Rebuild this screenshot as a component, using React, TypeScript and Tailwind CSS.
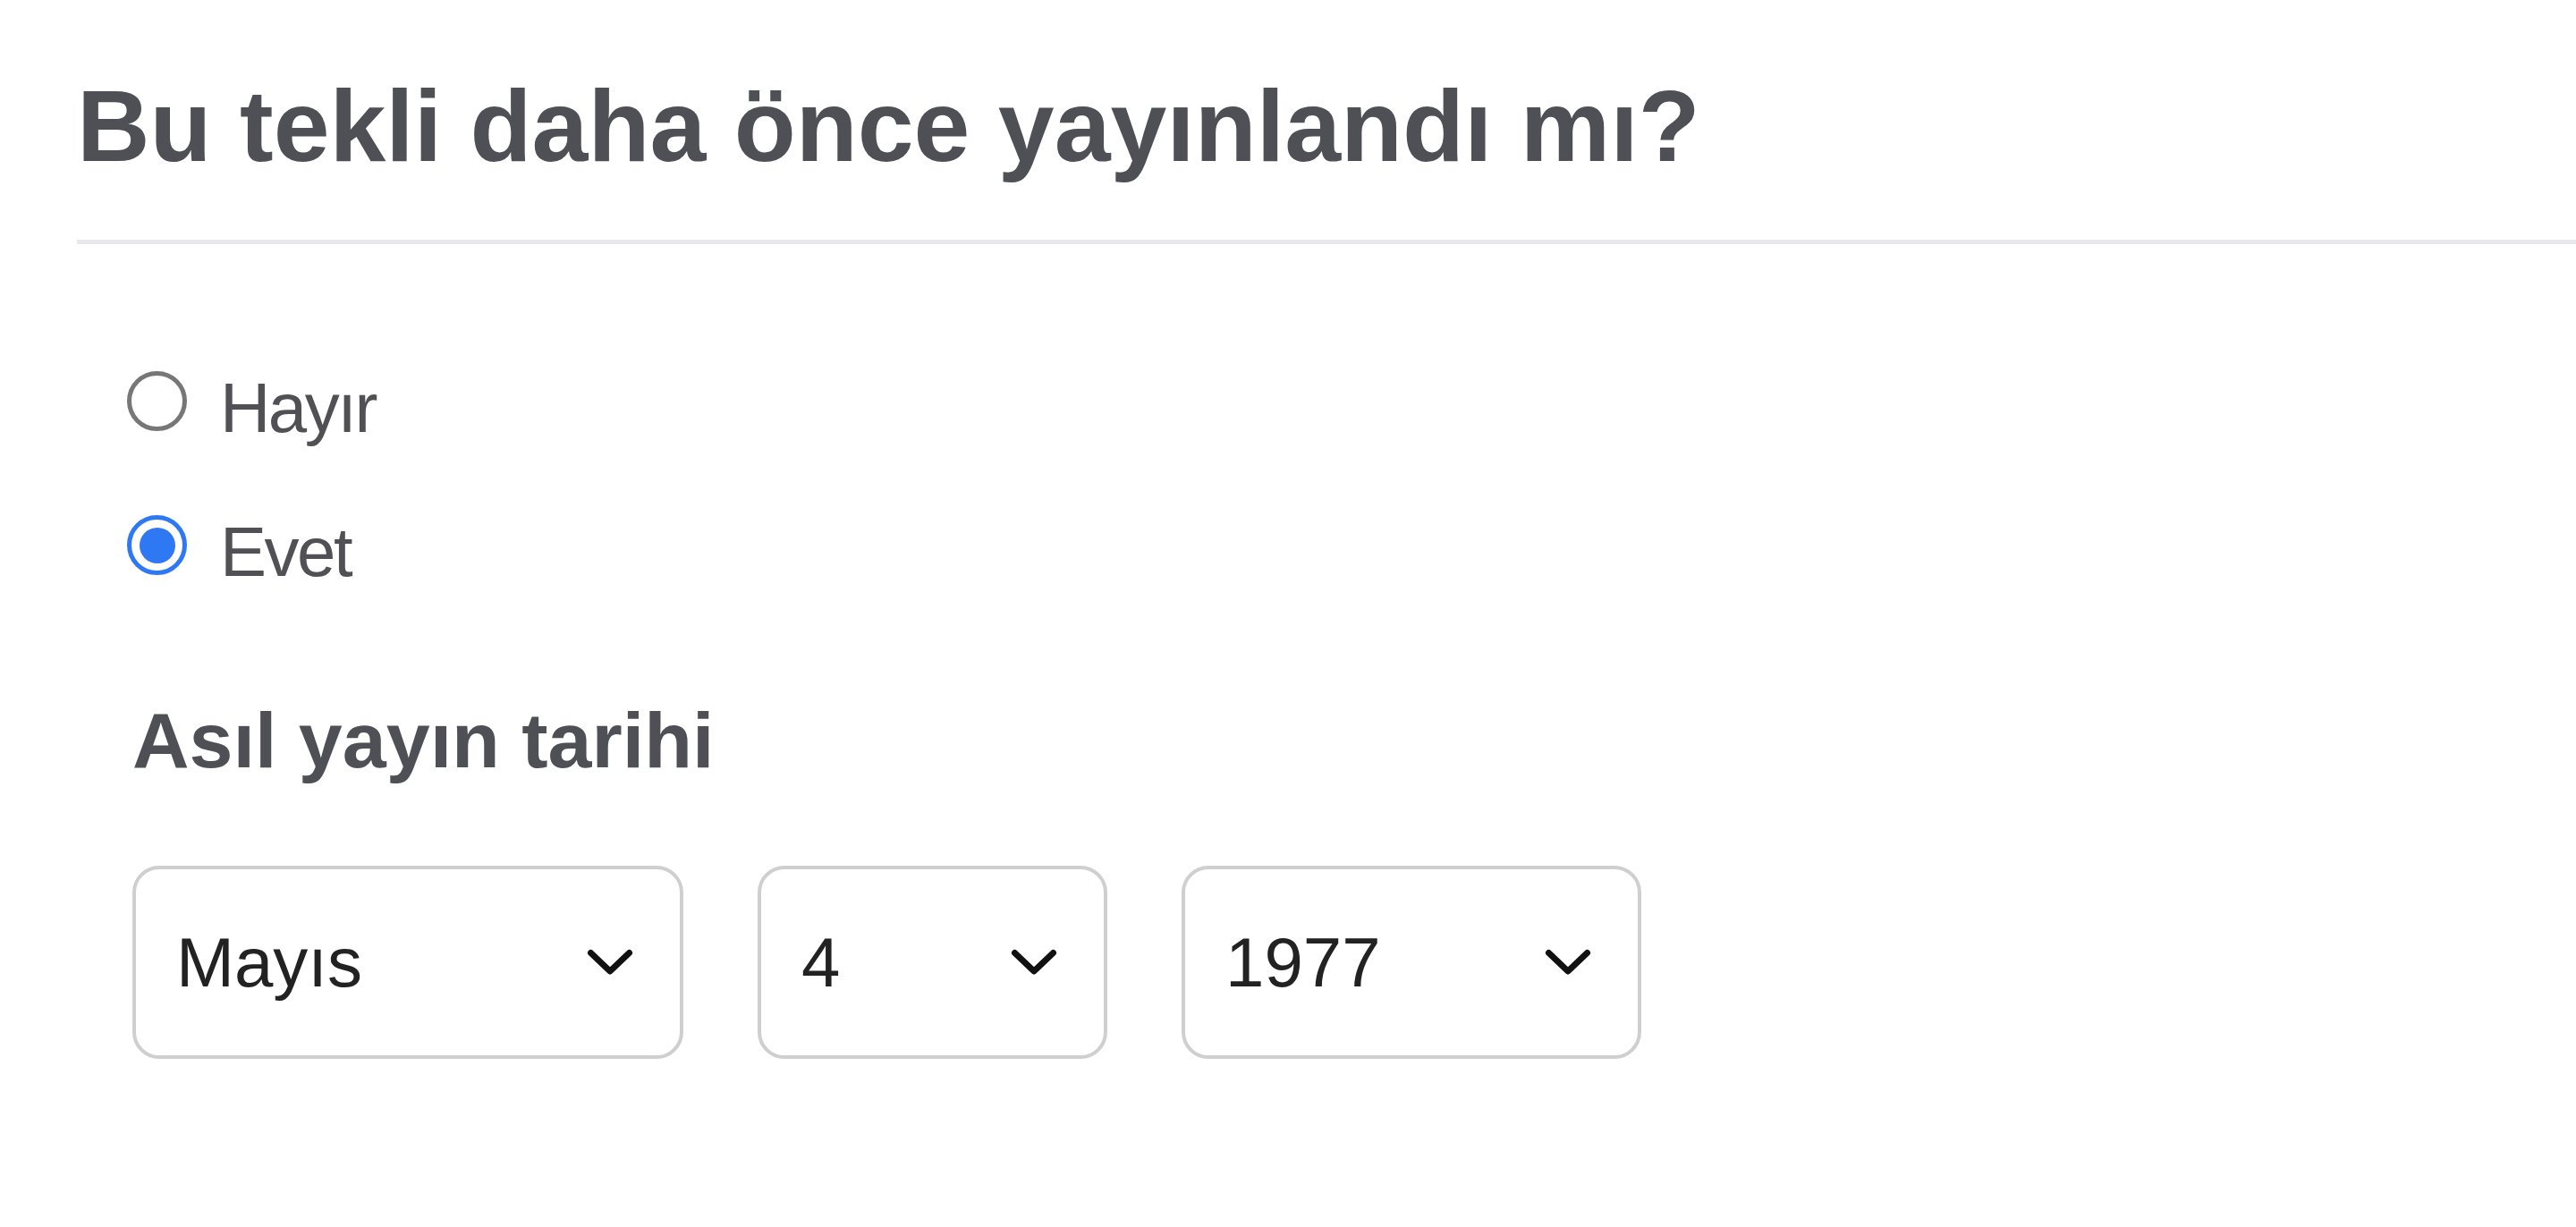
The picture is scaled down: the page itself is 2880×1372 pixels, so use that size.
import { useState } from 'react'

const months = ['Ocak', 'Şubat', 'Mart', 'Nisan', 'Mayıs', 'Haziran', 'Temmuz', 'Ağustos', 'Eylül', 'Ekim', 'Kasım', 'Aralık']

export default function App() {
  const [released, setReleased] = useState<'no' | 'yes'>('yes')

  return (
    <div className="min-h-screen bg-white font-['Liberation_Sans',Arial,sans-serif] text-[#4f5055]">
      <div className="pt-[84px] pl-[86px]">
        <h1 className="text-[113px] leading-[114px] font-bold whitespace-nowrap">Bu tekli daha önce yayınlandı mı?</h1>
        <div className="mt-[70px] h-[5px] bg-[#e8e8ec]" />

        {/* Radios */}
        <div className="pl-[56px] pt-[138px] flex flex-col gap-[71px]">
          <Radio label="Hayır" checked={released === 'no'} onClick={() => setReleased('no')} />
          <Radio label="Evet" checked={released === 'yes'} onClick={() => setReleased('yes')} />
        </div>

        {released === 'yes' && (
          <div className="pl-[62px]">
            <h2 className="mt-[116px] text-[88px] leading-[100px] font-bold whitespace-nowrap">Asıl yayın tarihi</h2>
            <div className="mt-[90px] flex gap-[83px]">
              <SelectBox value={months[4]} width="w-[616px]" />
              <SelectBox value="4" width="w-[391px]" />
              <SelectBox value="1977" width="w-[514px]" />
            </div>
          </div>
        )}
      </div>
    </div>
  )
}

function Radio({ label, checked, onClick }: { label: string; checked?: boolean; onClick: () => void }) {
  return (
    <button onClick={onClick} className="flex items-start h-[90px] text-left">
      {checked ? (
        <span className="mt-[4px] w-[67px] h-[67px] rounded-full border-[5px] border-[#2f78f4] flex items-center justify-center">
          <span className="w-[40px] h-[40px] rounded-full bg-[#2f78f4]" />
        </span>
      ) : (
        <span className="mt-[4px] w-[67px] h-[67px] rounded-full border-[5px] border-[#777777]" />
      )}
      <span className="ml-[37px] text-[78px] leading-[90px] tracking-[-2.5px] text-[#505055]">{label}</span>
    </button>
  )
}

function SelectBox({ value, width }: { value: string; width: string }) {
  return (
    <div className={`${width} h-[216px] border-[4px] border-[#cfcfcf] rounded-[30px] pl-[45px] pr-[52px] flex items-center justify-between bg-white`}>
      <span className="text-[78px] leading-none text-[#222222]">{value}</span>
      <svg width="52" height="30" viewBox="0 0 52 30" fill="none" stroke="#111111" strokeWidth={7} strokeLinecap="round" strokeLinejoin="round">
        <path d="M4.5 4.5L26 25L47.5 4.5" />
      </svg>
    </div>
  )
}
